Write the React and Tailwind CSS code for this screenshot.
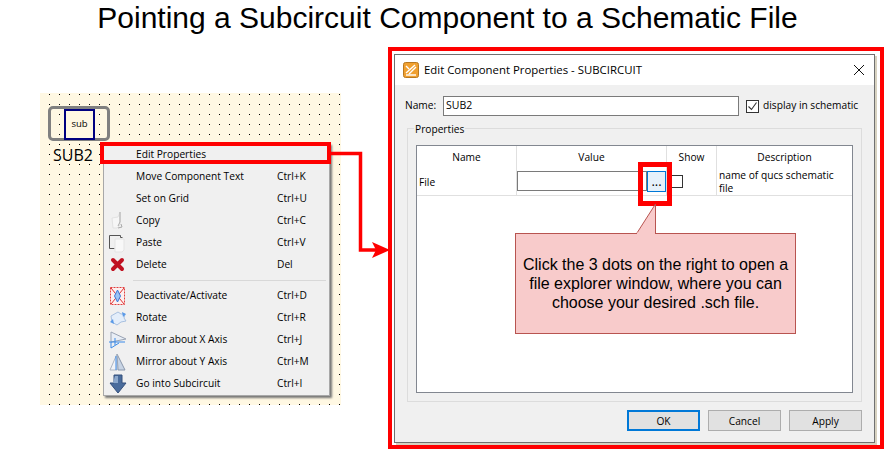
const dotted = "bg-[#fff8e3] bg-[radial-gradient(circle_at_0.5px_0.5px,#000_0.5px,transparent_0.5px)] bg-[length:10px_10px] bg-[position:9px_1px]";
const ui = "font-['Open_Sans','Noto_Sans',sans-serif]";

const Ic = ({ children }) => (
  <svg width="22" height="22" viewBox="0 0 22 22" className="shrink-0">{children}</svg>
);

const icons = {
  copy: <Ic><path d="M5 8l6-1 2-5v13l-3 3H6z" fill="#f6f6f6" stroke="#e2e2e2" /><path d="M13 2v10l-2 4M14 14l1 3-4 1" fill="none" stroke="#aaa" /></Ic>,
  paste: <Ic><path d="M2.500 3.500h11v2h2M2.500 3.500v13h5" fill="none" stroke="#555" /><path d="M8 7h9v11l-2 2H8z" fill="#f8f8f8" stroke="#e4e4e4" /></Ic>,
  del: <Ic><path d="M6 6l9 9M15 6l-9 9" stroke="#c01020" strokeWidth="4" strokeLinecap="round" /></Ic>,
  deact: <Ic><rect x="3.500" y="2.500" width="14" height="17" fill="#fdf0f0" stroke="#e04040" strokeDasharray="2 1" /><path d="M4 3l13 16M17 3L4 19" stroke="#e03030" /><path d="M10.500 5l3 6-3 6-3-6z" fill="#9cc4f4" stroke="#3a78d8" /></Ic>,
  rotate: <Ic><path d="M4 9l7-4 3 2 4 0-1 4 2 3-5 1-4 3-5-3z" fill="#e4eefa" stroke="#a8c0e0" /><path d="M15 5l4 2-3 3M7 17l-4-2 3-3" fill="#5a9ae8" /></Ic>,
  mx: <Ic><path d="M4 3l15 7-15 3z" fill="#e8eef6" stroke="#9aa4b4" /><path d="M2 13h16M4 13v6l8-5" fill="none" stroke="#3a8ae8" /><path d="M8 9v7" stroke="#3a8ae8" /></Ic>,
  my: <Ic><path d="M10 3l8 16H11z" fill="#c8d4e4" stroke="#8a98ac" /><path d="M10 3L3 19h7z" fill="#f2f4f8" stroke="#aeb6c2" /><path d="M9 5v14" stroke="#3a8ae8" /></Ic>,
  go: <Ic><path d="M7 2h8v8h4l-8 10-8-10h4z" fill="#4a6c9c" stroke="#34507c" /><path d="M8 3h3v7H6z" fill="#8ca8cc" /></Ic>,
};

const rows = [
  ["Edit Properties", ""],
  ["Move Component Text", "Ctrl+K"],
  ["Set on Grid", "Ctrl+U"],
  ["Copy", "Ctrl+C", "copy"],
  ["Paste", "Ctrl+V", "paste"],
  ["Delete", "Del", "del"],
  null,
  ["Deactivate/Activate", "Ctrl+D", "deact"],
  ["Rotate", "Ctrl+R", "rotate"],
  ["Mirror about X Axis", "Ctrl+J", "mx"],
  ["Mirror about Y Axis", "Ctrl+M", "my"],
  ["Go into Subcircuit", "Ctrl+I", "go"],
];

function Menu() {
  return (
    <div className={`absolute left-[63px] top-[50px] w-[227px] h-[253px] bg-[#f0f0f0] border border-[#a8a8a8] shadow-[2px_2px_2px_#777] text-[10.200px] text-black ${ui}`}>
      {rows.map((r, i) =>
        r === null ? (
          <div key={i} className="h-[9px] flex items-center pl-[29px] pr-[3px]">
            <div className="h-px w-full bg-[#d8d8d8]" />
          </div>
        ) : (
          <div key={i} className="h-[22px] flex items-center pl-[3px]">
            <div className="w-[29px] shrink-0">{r[2] ? icons[r[2]] : null}</div>
            <span className="w-[141px] shrink-0 whitespace-nowrap">{r[0]}</span>
            <span className="whitespace-nowrap">{r[1]}</span>
          </div>
        )
      )}
    </div>
  );
}

function Schematic() {
  return (
    <div className={`relative mt-[57px] ml-[40px] w-[301px] h-[312px] shrink-0 ${dotted}`}>
      <div className="absolute left-[8px] top-[13px] w-[62px] h-[35px] border-[3px] border-[#808080] rounded-[5px]" />
      <div className={`absolute left-[24px] top-[16px] w-[31px] h-[31px] border-2 border-[#000080] bg-[#fff8e3] flex items-center justify-center text-[9.500px] text-black ${ui}`}>sub</div>
      <div className={`absolute left-[13px] top-[50px] text-[16px] leading-[24px] text-black ${ui}`}>SUB2</div>
      <Menu />
    </div>
  );
}

function Dialog() {
  return (
    <div className={`ml-[47px] mt-[11px] w-[496px] h-[402px] shrink-0 border-4 border-[#ff0000] pl-[2px] pt-[3px] ${ui}`}>
      <div className="w-[481px] h-[389px] border border-[#707070] bg-[#f0f0f0] shadow-[2px_2px_0_#d8d2c0] flex flex-col text-[10.200px] text-black">
        <div className="h-[30px] bg-white flex items-center pl-[8px] pr-[9px] shrink-0">
          <svg width="16" height="16" viewBox="0 0 16 16" className="shrink-0">
            <rect x="0.500" y="0.500" width="15" height="15" rx="2" fill="#f0a030" stroke="#b87820" />
            <path d="M3 11L12 3M6 12l7-7M3 4l3 3" stroke="#fff" strokeWidth="1.400" />
            <rect x="3" y="12" width="10" height="2" fill="#fff" opacity="0.700" />
          </svg>
          <span className="ml-[5px] text-[11.400px] whitespace-nowrap">Edit Component Properties - SUBCIRCUIT</span>
          <svg width="12" height="12" viewBox="0 0 12 12" className="ml-auto">
            <path d="M1 1l10 10M11 1L1 11" stroke="#111" strokeWidth="1" fill="none" />
          </svg>
        </div>

        <div className="flex items-center h-[20px] mt-[11px] pl-[10px] shrink-0">
          <span className="w-[38px]">Name:</span>
          <div className="w-[296px] h-[20px] bg-white border border-[#7a7a7a] flex items-center pl-[2px] text-[10.500px]">SUB2</div>
          <div className="ml-[7px] w-[13px] h-[13px] border border-[#333] bg-white flex items-center justify-center">
            <svg width="11" height="11" viewBox="0 0 11 11"><path d="M1.500 5.500l3 3 5-7" fill="none" stroke="#333" strokeWidth="1.100" /></svg>
          </div>
          <span className="ml-[4px] whitespace-nowrap">display in schematic</span>
        </div>

        <div className="relative mt-[12px] ml-[12px] w-[455px] h-[274px] border border-[#dcdcdc] pl-[8px] pt-[16px] shrink-0">
          <span className="absolute left-[6px] -top-[7px] px-[1px] bg-[#f0f0f0] leading-[15px]">Properties</span>
          <div className="w-[437px] h-[248px] border border-[#828790] bg-white">
            <div className="grid grid-cols-[100px_150px_50px_1fr] h-[50px] border-b border-[#e0e0e0]">
              <div className="h-[22px] pt-[2px] border-r border-[#e0e0e0] flex items-center justify-center">Name</div>
              <div className="h-[22px] pt-[2px] border-r border-[#e0e0e0] flex items-center justify-center">Value</div>
              <div className="h-[22px] pt-[2px] border-r border-[#e0e0e0] flex items-center justify-center">Show</div>
              <div className="h-[22px] pt-[2px] flex items-center justify-center">Description</div>
              <div className="h-[27px] pt-[2px] border-r border-[#e0e0e0] flex items-center pl-[2px]">File</div>
              <div className="h-[27px] border-r border-[#e0e0e0] flex items-start pt-[3px]">
                <div className="w-[130px] h-[20px] bg-white border border-[#7a7a7a]" />
                <div className="w-[19px] h-[21px] bg-[#e5f1fb] border border-[#0078d7] flex items-center justify-center text-[13px] leading-[13px]">...</div>
              </div>
              <div className="h-[27px] border-r border-[#e0e0e0] pl-[4px] pt-[7px]">
                <div className="w-[12px] h-[13px] border border-[#333] bg-white" />
              </div>
              <div className="h-[27px] pl-[2px] leading-[13px] pt-[1px]">name of qucs schematic<br />file</div>
            </div>
          </div>
        </div>

        <div className="flex gap-[8px] justify-end mt-[8px] pr-[12px] shrink-0">
          <div className="w-[73px] h-[21px] pt-[2px] bg-[#e1e1e1] border-2 border-[#0078d7] flex items-center justify-center">OK</div>
          <div className="w-[73px] h-[21px] pt-[2px] bg-[#e1e1e1] border border-[#adadad] flex items-center justify-center">Cancel</div>
          <div className="w-[73px] h-[21px] pt-[2px] bg-[#e1e1e1] border border-[#adadad] flex items-center justify-center">Apply</div>
        </div>
      </div>
    </div>
  );
}

export default function App() {
  return (
    <div className="relative w-[895px] h-[450px] overflow-hidden bg-white">
      <h1 className="h-[36px] text-center text-[30px] leading-[36px] text-black font-['Liberation_Sans',sans-serif] whitespace-nowrap">
        Pointing a Subcircuit Component to a Schematic File
      </h1>
      <div className="flex items-start">
        <Schematic />
        <Dialog />
      </div>

      {/* annotations over the content */}
      <div className="absolute left-[100px] top-[142px] w-[231px] h-[22px] border-4 border-[#ff0000]" />
      <svg className="absolute left-0 top-0 pointer-events-none" width="895" height="450" viewBox="0 0 895 450">
        <path d="M331 153.500H360.500V250H376" fill="none" stroke="#ff0000" strokeWidth="3.500" />
        <path d="M372 242L390 250L372 258L376 250z" fill="#ff0000" />
      </svg>
      <div className="absolute left-[638px] top-[162px] w-[34px] h-[44px] border-[5px] border-[#ff0000]" />

      <svg className="absolute left-[630px] top-[200px]" width="30" height="36" viewBox="0 0 30 36">
        <path d="M6 34.500L25.500 4V34.500" fill="#f8cbcb" stroke="#b85450" />
      </svg>
      <div className="absolute left-[515px] top-[233px] w-[281px] h-[101px] bg-[#f8cbcb] border border-[#b85450] flex items-center justify-center text-center text-[16px] leading-[19px] text-black font-['Liberation_Sans',sans-serif]">
        <div className="whitespace-nowrap">
          Click the 3 dots on the right to open a<br />
          file explorer window, where you can<br />
          choose your desired .sch file.
        </div>
      </div>
      <svg className="absolute left-[630px] top-[232px]" width="30" height="4" viewBox="0 0 30 4">
        <path d="M7 2H25" stroke="#f8cbcb" strokeWidth="3" />
      </svg>
    </div>
  );
}
